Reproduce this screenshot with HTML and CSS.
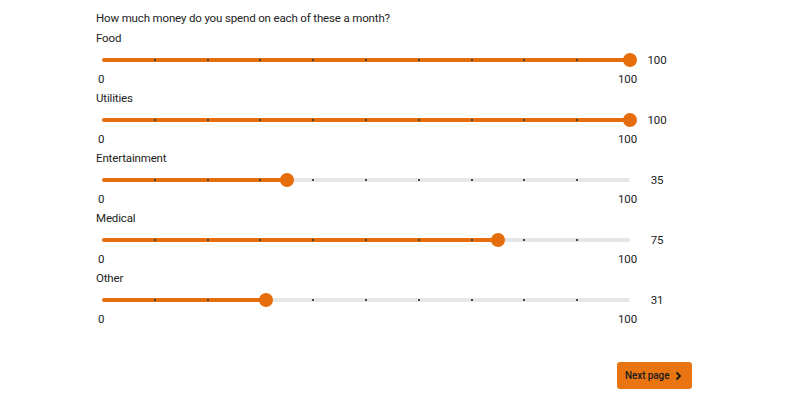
FILE: index.html
```html
<!DOCTYPE html>
<html lang="en">

<head>
    <meta charset="UTF-8">
    <meta name="viewport" content="width=device-width, initial-scale=1.0">
    <title>Survey</title>
    <link rel="stylesheet" href="styles.css">
</head>

<body>
    <div id="survey">
        <div class="question">How much money do you spend on each of these a month?</div>

        <div class="row">
            <div class="label">Food</div>
            <div class="slider">
                <div class="track">
                    <div class="fill" style="width: 100%"></div>
                    <div class="ticks"><i></i><i></i><i></i><i></i><i></i><i></i><i></i><i></i><i></i></div>
                    <div class="thumb" style="left: 100%"></div>
                </div>
                <div class="value">100</div>
            </div>
            <div class="scale"><span>0</span><span>100</span></div>
        </div>

        <div class="row">
            <div class="label">Utilities</div>
            <div class="slider">
                <div class="track">
                    <div class="fill" style="width: 100%"></div>
                    <div class="ticks"><i></i><i></i><i></i><i></i><i></i><i></i><i></i><i></i><i></i></div>
                    <div class="thumb" style="left: 100%"></div>
                </div>
                <div class="value">100</div>
            </div>
            <div class="scale"><span>0</span><span>100</span></div>
        </div>

        <div class="row">
            <div class="label">Entertainment</div>
            <div class="slider">
                <div class="track">
                    <div class="fill" style="width: 35%"></div>
                    <div class="ticks"><i></i><i></i><i></i><i></i><i></i><i></i><i></i><i></i><i></i></div>
                    <div class="thumb" style="left: 35%"></div>
                </div>
                <div class="value">35</div>
            </div>
            <div class="scale"><span>0</span><span>100</span></div>
        </div>

        <div class="row">
            <div class="label">Medical</div>
            <div class="slider">
                <div class="track">
                    <div class="fill" style="width: 75%"></div>
                    <div class="ticks"><i></i><i></i><i></i><i></i><i></i><i></i><i></i><i></i><i></i></div>
                    <div class="thumb" style="left: 75%"></div>
                </div>
                <div class="value">75</div>
            </div>
            <div class="scale"><span>0</span><span>100</span></div>
        </div>

        <div class="row">
            <div class="label">Other</div>
            <div class="slider">
                <div class="track">
                    <div class="fill" style="width: 31%"></div>
                    <div class="ticks"><i></i><i></i><i></i><i></i><i></i><i></i><i></i><i></i><i></i></div>
                    <div class="thumb" style="left: 31%"></div>
                </div>
                <div class="value">31</div>
            </div>
            <div class="scale"><span>0</span><span>100</span></div>
        </div>

        <div class="footer">
            <button class="next"><span>Next page</span>
                <svg width="7" height="10" viewBox="0 0 7 10"><path d="M1.5 1.5 L5 5 L1.5 8.5" fill="none" stroke="#1a1a1a" stroke-width="1.8"/></svg>
            </button>
        </div>
    </div>
</body>

</html>
```

FILE: styles.css
```css
body {
    margin: 0;
    background: #fff;
    font-family: Roboto, "Liberation Sans", sans-serif;
    font-size: 11.5px;
    letter-spacing: -0.15px;
    color: #222;
}

#survey {
    padding: 10px 0 0 96px;
    width: 596px;
}

.question {
    line-height: 16px;
    margin-bottom: 4px;
}

.row {
    height: 60px;
}

.label {
    line-height: 16px;
    margin-bottom: 6px;
}

.slider {
    display: flex;
    align-items: center;
    height: 16px;
    margin: 0 0 3px 6px;
}

.track {
    position: relative;
    width: 528px;
    height: 4px;
    border-radius: 2px;
    background-color: #e6e6e6;
}

.fill {
    height: 100%;
    border-radius: 2px;
    background-color: #e66d0c;
}

.ticks {
    position: absolute;
    top: 0;
    left: 0;
    width: 100%;
    height: 100%;
    display: flex;
    justify-content: space-between;
    align-items: center;
    padding: 0 calc(10% - 1px);
    box-sizing: border-box;
}

.ticks i {
    width: 2px;
    height: 2px;
    background-color: #444;
}

.thumb {
    position: absolute;
    top: 50%;
    width: 14px;
    height: 14px;
    margin: -7px 0 0 -7px;
    border-radius: 50%;
    background-color: #e66d0c;
}

.value {
    width: 30px;
    margin-left: 12px;
    text-align: center;
    line-height: 16px;
}

.scale {
    display: flex;
    justify-content: space-between;
    width: 539px;
    margin-left: 2px;
    line-height: 16px;
}

.footer {
    display: flex;
    justify-content: flex-end;
    margin-top: 32px;
}

.next {
    display: flex;
    align-items: center;
    justify-content: space-between;
    width: 75px;
    height: 27px;
    padding: 0 10px 0 8px;
    border: none;
    border-radius: 3px;
    background-color: #e87412;
    font-family: Roboto, "Liberation Sans", sans-serif;
    font-size: 10px;
    font-weight: 500;
    letter-spacing: -0.1px;
    white-space: nowrap;
    color: #1a1a1a;
}
```
